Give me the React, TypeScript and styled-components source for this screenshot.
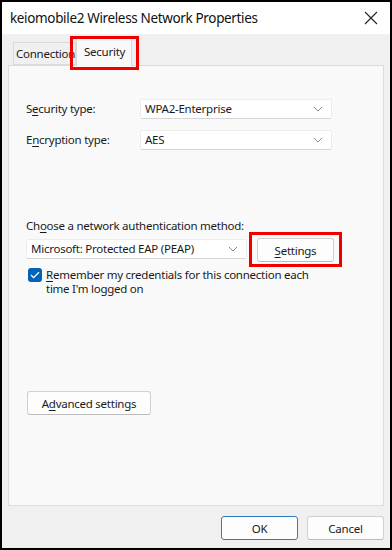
import {FC, ReactNode} from 'react';
import styled, {createGlobalStyle} from 'styled-components';

const GlobalStyle = createGlobalStyle`
    html, body {
        margin: 0;
        padding: 0;
        background: #ffffff;
    }
    * {
        box-sizing: border-box;
    }
`;

const Window = styled.div`
    width: 392px;
    height: 550px;
    border: 2px solid #000;
    background: #f0f0f0;
    display: flex;
    flex-direction: column;
    font-family: "Noto Sans", "Open Sans", sans-serif;
    color: #1a1a1a;
`;

const TitleBar = styled.div`
    height: 32px;
    background: #ffffff;
    display: flex;
    align-items: center;
    justify-content: space-between;
    padding: 0 12px 0 8px;
    font-size: 13.5px;
    letter-spacing: -0.35px;
    color: #111;
`;

const Body = styled.div`
    flex: 1;
    display: flex;
    flex-direction: column;
    padding: 0 6px;
    font-size: 11.5px;
    letter-spacing: -0.25px;
`;

const TabRow = styled.div`
    height: 31px;
    display: flex;
    align-items: flex-end;
    padding-left: 5px;
`;

const Tab = styled.div<{$active?: boolean; $marked?: boolean}>`
    position: relative;
    height: ${p => (p.$active ? '30px' : '23px')};
    margin-bottom: ${p => (p.$active ? '-1px' : '0')};
    padding: ${p => (p.$active ? '7px 6px 0 7px' : '3px 6px 0 2px')};
    line-height: 16px;
    background: ${p => (p.$active ? '#f9f9f9' : '#f0f0f0')};
    border: 1px solid #dadada;
    border-bottom: ${p => (p.$active ? 'none' : '1px solid #dadada')};
    z-index: ${p => (p.$active ? 2 : 1)};
    white-space: nowrap;
    overflow: hidden;
    ${p => (p.$active ? '' : 'width: 63px;')}

    ${p =>
        p.$marked &&
        `
        overflow: visible;
        &::after {
            content: '';
            position: absolute;
            left: -7px;
            right: -8px;
            top: -1px;
            bottom: -4px;
            border: 3px solid #ee0000;
        }
    `}
`;

const Panel = styled.div`
    flex: 1;
    position: relative;
    z-index: 1;
    background: #f9f9f9;
    border: 1px solid #dcdcdc;
    padding: 33px 18px 0 17px;
    display: flex;
    flex-direction: column;
    line-height: 16px;
`;

const FieldGrid = styled.div`
    display: grid;
    grid-template-columns: 114px 192px;
    row-gap: 11px;
    align-items: center;
`;

const Label = styled.div`
    white-space: nowrap;
`;

const SelectBox = styled.div<{$width?: number}>`
    height: 20px;
    width: ${p => (p.$width ? `${p.$width}px` : 'auto')};
    background: #ffffff;
    border: 1px solid #ececec;
    border-bottom-color: #d6d6d6;
    border-radius: 2px;
    display: flex;
    align-items: center;
    justify-content: space-between;
    padding: 0 8px 0 4px;
    white-space: nowrap;
`;

const AuthSection = styled.div`
    margin-top: 68px;
    display: flex;
    flex-direction: column;
`;

const AuthRow = styled.div`
    margin-top: 4px;
    display: flex;
    align-items: flex-start;
    gap: 10px;

    & > ${SelectBox} {
        margin-top: 1px;
    }
`;

const Button = styled.button<{$width: number; $marked?: boolean; $default?: boolean}>`
    position: relative;
    width: ${p => p.$width}px;
    height: 24px;
    font-family: inherit;
    font-size: inherit;
    letter-spacing: inherit;
    color: #1a1a1a;
    background: #fdfdfd;
    border: 1px solid ${p => (p.$default ? '#2e7bc4' : '#d0d0d0')};
    border-bottom-color: ${p => (p.$default ? '#2e7bc4' : '#bcbcbc')};
    border-radius: 3px;
    padding: 0;

    ${p =>
        p.$marked &&
        `
        &::after {
            content: '';
            position: absolute;
            left: -9px;
            right: -9px;
            top: -7px;
            bottom: -6px;
            border: 3px solid #ee0000;
        }
    `}
`;

const CheckRow = styled.div`
    margin-top: 6px;
    margin-left: 2px;
    display: flex;
    align-items: flex-start;
    gap: 4px;
    line-height: 14px;
`;

const CheckBox = styled.div`
    width: 14px;
    height: 14px;
    flex: none;
    border-radius: 3px;
    background: #0063b8;
    display: flex;
    align-items: center;
    justify-content: center;
`;

const AdvancedWrap = styled.div`
    margin-top: 95px;
    margin-left: 1px;
`;

const Footer = styled.div`
    height: 42px;
    display: flex;
    align-items: flex-start;
    justify-content: flex-end;
    gap: 9px;
    padding-top: 10px;
`;

const U = styled.span`
    text-decoration: underline;
    text-underline-offset: 2px;
`;

const Chevron: FC = () => (
    <svg width="10" height="6" viewBox="0 0 10 6">
        <path d="M1 1l4 4 4-4" fill="none" stroke="#8a8a8a" strokeWidth="1" />
    </svg>
);

const Select: FC<{children: ReactNode; width?: number}> = ({children, width}) => (
    <SelectBox $width={width}>
        <span>{children}</span>
        <Chevron />
    </SelectBox>
);

export default function App() {
    return (
        <>
            <GlobalStyle />
            <Window>
                <TitleBar>
                    <span>keiomobile2 Wireless Network Properties</span>
                    <svg width="14" height="14" viewBox="0 0 14 14">
                        <path d="M1 1l12 12M13 1L1 13" stroke="#222" strokeWidth="1.1" />
                    </svg>
                </TitleBar>
                <Body>
                    <TabRow>
                        <Tab>Connection</Tab>
                        <Tab $active $marked>Security</Tab>
                    </TabRow>
                    <Panel>
                        <FieldGrid>
                            <Label>S<U>e</U>curity type:</Label>
                            <Select>WPA2-Enterprise</Select>
                            <Label>E<U>n</U>cryption type:</Label>
                            <Select>AES</Select>
                        </FieldGrid>

                        <AuthSection>
                            <Label>Ch<U>o</U>ose a network authentication method:</Label>
                            <AuthRow>
                                <Select width={221}>Microsoft: Protected EAP (PEAP)</Select>
                                <Button $width={77} $marked><U>S</U>ettings</Button>
                            </AuthRow>
                            <CheckRow>
                                <CheckBox>
                                    <svg width="10" height="8" viewBox="0 0 10 8">
                                        <path d="M1 4l2.6 2.6L9 1.2" fill="none" stroke="#fff" strokeWidth="1.3" />
                                    </svg>
                                </CheckBox>
                                <span>
                                    <U>R</U>emember my credentials for this connection each
                                    <br />
                                    time I'm logged on
                                </span>
                            </CheckRow>
                        </AuthSection>

                        <AdvancedWrap>
                            <Button $width={124}>A<U>d</U>vanced settings</Button>
                        </AdvancedWrap>
                    </Panel>
                    <Footer>
                        <Button $width={77} $default>OK</Button>
                        <Button $width={77}>Cancel</Button>
                    </Footer>
                </Body>
            </Window>
        </>
    );
}
